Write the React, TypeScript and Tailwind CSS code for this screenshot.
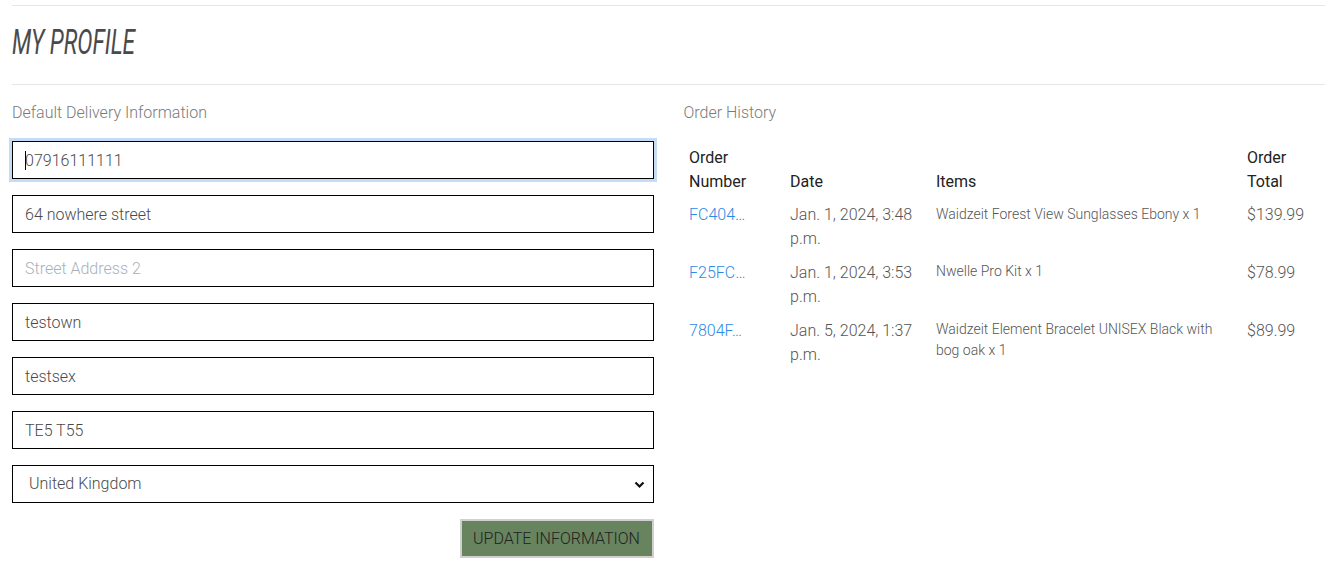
import React from "react";

const orders = [
  { id: "FC404\u2026", date: ["Jan. 1, 2024, 3:48", "p.m."], items: "Waidzeit Forest View Sunglasses Ebony x 1", total: "$139.99" },
  { id: "F25FC\u2026", date: ["Jan. 1, 2024, 3:53", "p.m."], items: "Nwelle Pro Kit x 1", total: "$78.99" },
  { id: "7804F\u2026", date: ["Jan. 5, 2024, 1:37", "p.m."], items: "Waidzeit Element Bracelet UNISEX Black with bog oak x 1", total: "$89.99" },
];

function Field({ value, placeholder }: { value?: string; placeholder?: string }) {
  return (
    <input
      readOnly
      defaultValue={value}
      placeholder={placeholder}
      className="block w-full h-[38px] border border-black bg-white px-3 text-[16px] font-light text-[#4a4a4a] placeholder:text-[#a9b0bb] outline-none"
    />
  );
}

export default function App() {
  return (
    <div className="min-h-screen bg-white" style={{ fontFamily: "Roboto, 'Noto Sans', sans-serif" }}>
      <div className="px-3 pt-[5px]">
        <div className="box-border h-[79px] border-t border-[#e6e6e6] flex items-center pb-[6px]">
          <h1 className="inline-block origin-left scale-x-[0.65] text-[35px] leading-none italic font-normal text-[#4a4a4a] whitespace-nowrap">
            MY PROFILE
          </h1>
        </div>
        <div className="border-t border-[#e6e6e6] grid grid-cols-2 gap-x-[30px] pt-[16px]">
          <div>
            <div className="text-[16px] leading-6 font-light text-[#7a7a7a] mb-[16px]">Default Delivery Information</div>
            <div className="flex flex-col gap-4">
              <div className="relative">
                <input
                  readOnly
                  defaultValue="07916111111"
                  className="block w-full h-[38px] border border-black bg-white px-3 text-[16px] font-light text-[#4a4a4a] outline-none ring-[3px] ring-[#c5dcf6] caret-transparent"
                />
                <span className="absolute left-[13px] top-[10px] h-[19px] w-px bg-black" />
              </div>
              <Field value="64 nowhere street" />
              <Field placeholder="Street Address 2" />
              <Field value="testown" />
              <Field value="testsex" />
              <Field value="TE5 T55" />
              <div className="relative h-[38px] border border-black bg-white flex items-center pl-4 text-[16px] font-light text-[#4a4a4a]">
                United Kingdom
                <svg className="absolute right-[8px] top-[15px]" width="11" height="8" viewBox="0 0 11 8">
                  <path d="M1.5 1.5 L5.5 5.5 L9.5 1.5" fill="none" stroke="#111" strokeWidth="2.2" />
                </svg>
              </div>
            </div>
            <div className="flex justify-end mt-4">
              <button className="h-[39px] w-[194px] border-2 border-[#d0d0d0] bg-[#67845f] text-[16px] font-light text-[#222] uppercase">
                Update Information
              </button>
            </div>
          </div>
          <div>
            <div className="text-[16px] leading-6 font-light text-[#7a7a7a]">Order History</div>
            <table className="mt-[15px] w-full table-fixed border-collapse">
              <colgroup>
                <col className="w-[101px]" />
                <col className="w-[146px]" />
                <col className="w-[311px]" />
                <col />
              </colgroup>
              <thead>
                <tr className="text-[16px] leading-6 font-normal text-[#222] text-left align-bottom">
                  <th className="pl-[5.5px] pr-[4.8px] pt-[5.8px] pb-[4.8px] font-normal">Order<br />Number</th>
                  <th className="pl-[5.5px] pr-[4.8px] pt-[5.8px] pb-[4.8px] font-normal">Date</th>
                  <th className="pl-[5.5px] pr-[4.8px] pt-[5.8px] pb-[4.8px] font-normal">Items</th>
                  <th className="pl-[5.5px] pr-[4.8px] pt-[5.8px] pb-[4.8px] font-normal">Order<br />Total</th>
                </tr>
              </thead>
              <tbody>
                {orders.map((o) => (
                  <tr key={o.id} className="align-top">
                    <td className="pl-[5.5px] pr-[4.8px] py-[4.8px] text-[16px] leading-6 font-light text-[#2b8ae6]">{o.id}</td>
                    <td className="pl-[5.5px] pr-[4.8px] py-[4.8px] text-[16px] leading-6 font-light text-[#555]">
                      {o.date[0]}
                      <br />
                      {o.date[1]}
                    </td>
                    <td className="pl-[5.5px] pr-[4.8px] pt-[5px] pb-[4.8px] text-[14px] leading-[21px] font-light text-[#555]">{o.items}</td>
                    <td className="pl-[5.5px] pr-[4.8px] py-[4.8px] text-[16px] leading-6 font-light text-[#555]">{o.total}</td>
                  </tr>
                ))}
              </tbody>
            </table>
          </div>
        </div>
      </div>
    </div>
  );
}
